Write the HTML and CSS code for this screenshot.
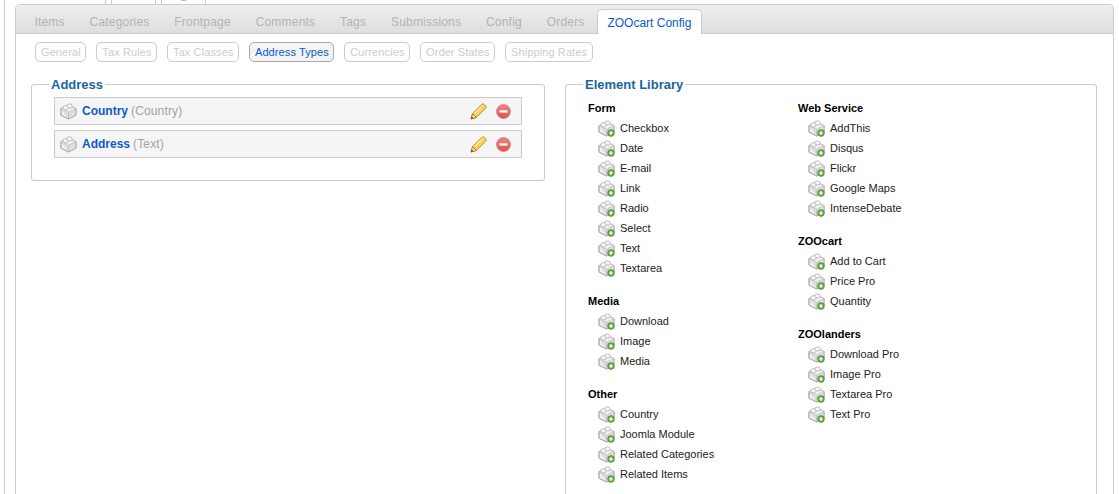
FILE: index.html
```html
<!DOCTYPE html>
<html>
<head>
    <meta charset="utf-8" />
    <title>ZOOcart Config</title>
    <link rel="stylesheet" href="styles.css">
</head>
<body>
    <svg class="defs" width="0" height="0">
        <defs>
            <linearGradient id="redFill" x1="0" y1="0" x2="0" y2="1">
                <stop offset="0" stop-color="#ee8580"/>
                <stop offset="1" stop-color="#dc5350"/>
            </linearGradient>
        </defs>
        <symbol id="brick" viewBox="0 0 17 17">
            <path d="M1 5.5 8.5 2 16 5.5v6.7L8.5 16 1 12.2z" fill="#f0f0f0" stroke="#b0b0b0"/>
            <path d="M1 5.8 8.5 9.5 16 5.8v6.4L8.5 16z" fill="#dedede"/>
            <path d="M1 5.5 8.5 9.3 16 5.5M8.5 9.3V16" fill="none" stroke="#bcbcbc" stroke-width=".8"/>
            <path d="M1 5.5v6.7L8.5 16l7.5-3.8V5.5" fill="none" stroke="#b0b0b0"/>
            <path d="M3 5.4V4.2a2.5 1.5 0 0 1 5 0v1.2a2.5 1.5 0 0 1-5 0z" fill="#f8f8f8" stroke="#b0b0b0" stroke-width=".8"/>
            <path d="M7 3.4V2.4a2.5 1.5 0 0 1 5 0v1a2.5 1.5 0 0 1-5 0z" fill="#f8f8f8" stroke="#b0b0b0" stroke-width=".8"/>
        </symbol>
        <symbol id="brick-add" viewBox="0 0 17 17">
            <use href="#brick"/>
            <circle cx="13" cy="13" r="3.4" fill="#6aa84a" stroke="#4a8a2e" stroke-width=".6"/>
            <path d="M13 11.1v3.8M11.1 13h3.8" stroke="#fff" stroke-width="1.2"/>
        </symbol>
        <symbol id="pencil" viewBox="0 0 17 17">
            <path d="M1 16 2.6 10.6 11.8 1.4a1.8 1.8 0 0 1 2.5 0l1.3 1.3a1.8 1.8 0 0 1 0 2.5L6.4 14.4z" fill="#f8d25c" stroke="#cf8f22"/>
            <path d="M1 16 2.6 10.6 6.4 14.4z" fill="#f3dcae" stroke="#a8691d" stroke-width=".8"/>
            <path d="M1 16 1.7 13.6 3.4 15.3z" fill="#6d431a"/>
            <path d="M4.6 10.6 12.6 2.6" stroke="#fdf0b5" stroke-width="1.2"/>
        </symbol>
        <symbol id="remove" viewBox="0 0 15 15">
            <circle cx="7.5" cy="7.5" r="6.9" fill="url(#redFill)" stroke="#d77b74" stroke-width=".9"/>
            <path d="M3.5 6.3h8v2.3h-8z" fill="#fff"/>
        </symbol>
    </svg>

    <div class="page">
        <div class="top-tabs">
            <span class="top-tab"></span>
            <span class="top-tab top-tab-mark"></span>
        </div>
        <div class="panel">
            <ul class="tabs">
                <li><a href="#">Items</a></li>
                <li><a href="#">Categories</a></li>
                <li><a href="#">Frontpage</a></li>
                <li><a href="#">Comments</a></li>
                <li><a href="#">Tags</a></li>
                <li><a href="#">Submissions</a></li>
                <li><a href="#">Config</a></li>
                <li><a href="#">Orders</a></li>
                <li class="active"><a href="#">ZOOcart Config</a></li>
            </ul>
            <ul class="subtabs">
                <li><a href="#">General</a></li>
                <li><a href="#">Tax Rules</a></li>
                <li><a href="#">Tax Classes</a></li>
                <li class="active"><a href="#">Address Types</a></li>
                <li><a href="#">Currencies</a></li>
                <li><a href="#">Order States</a></li>
                <li><a href="#">Shipping Rates</a></li>
            </ul>
            <div class="columns">
                <fieldset class="box assigned">
                    <legend>Address</legend>
                    <div class="element">
                        <svg class="brick"><use href="#brick"/></svg>
                        <a class="name" href="#">Country</a>
                        <span class="type">(Country)</span>
                        <svg class="edit"><use href="#pencil"/></svg>
                        <svg class="delete"><use href="#remove"/></svg>
                    </div>
                    <div class="element">
                        <svg class="brick"><use href="#brick"/></svg>
                        <a class="name" href="#">Address</a>
                        <span class="type">(Text)</span>
                        <svg class="edit"><use href="#pencil"/></svg>
                        <svg class="delete"><use href="#remove"/></svg>
                    </div>
                </fieldset>
                <fieldset class="box library">
                    <legend>Element Library</legend>
                    <div class="library-col">
                        <h4>Form</h4>
                        <ul>
                            <li><svg><use href="#brick-add"/></svg>Checkbox</li>
                            <li><svg><use href="#brick-add"/></svg>Date</li>
                            <li><svg><use href="#brick-add"/></svg>E-mail</li>
                            <li><svg><use href="#brick-add"/></svg>Link</li>
                            <li><svg><use href="#brick-add"/></svg>Radio</li>
                            <li><svg><use href="#brick-add"/></svg>Select</li>
                            <li><svg><use href="#brick-add"/></svg>Text</li>
                            <li><svg><use href="#brick-add"/></svg>Textarea</li>
                        </ul>
                        <h4>Media</h4>
                        <ul>
                            <li><svg><use href="#brick-add"/></svg>Download</li>
                            <li><svg><use href="#brick-add"/></svg>Image</li>
                            <li><svg><use href="#brick-add"/></svg>Media</li>
                        </ul>
                        <h4>Other</h4>
                        <ul>
                            <li><svg><use href="#brick-add"/></svg>Country</li>
                            <li><svg><use href="#brick-add"/></svg>Joomla Module</li>
                            <li><svg><use href="#brick-add"/></svg>Related Categories</li>
                            <li><svg><use href="#brick-add"/></svg>Related Items</li>
                        </ul>
                    </div>
                    <div class="library-col">
                        <h4>Web Service</h4>
                        <ul>
                            <li><svg><use href="#brick-add"/></svg>AddThis</li>
                            <li><svg><use href="#brick-add"/></svg>Disqus</li>
                            <li><svg><use href="#brick-add"/></svg>Flickr</li>
                            <li><svg><use href="#brick-add"/></svg>Google Maps</li>
                            <li><svg><use href="#brick-add"/></svg>IntenseDebate</li>
                        </ul>
                        <h4>ZOOcart</h4>
                        <ul>
                            <li><svg><use href="#brick-add"/></svg>Add to Cart</li>
                            <li><svg><use href="#brick-add"/></svg>Price Pro</li>
                            <li><svg><use href="#brick-add"/></svg>Quantity</li>
                        </ul>
                        <h4>ZOOlanders</h4>
                        <ul>
                            <li><svg><use href="#brick-add"/></svg>Download Pro</li>
                            <li><svg><use href="#brick-add"/></svg>Image Pro</li>
                            <li><svg><use href="#brick-add"/></svg>Textarea Pro</li>
                            <li><svg><use href="#brick-add"/></svg>Text Pro</li>
                        </ul>
                    </div>
                </fieldset>
            </div>
        </div>
    </div>
</body>
</html>
```

FILE: styles.css
```css
html, body {
    height: 494px;
    overflow: hidden;
}

body {
    margin: 0;
    background: #fff;
    font-family: "Liberation Sans", Arial, sans-serif;
    font-size: 11px;
    color: #222;
}

a {
    text-decoration: none;
}

ul {
    list-style: none;
    margin: 0;
    padding: 0;
}

.defs {
    display: block;
    height: 0;
}

.page {
    margin-left: 4px;
    height: 494px;
    box-sizing: border-box;
    padding-left: 10px;
    border-left: 1px solid #ccc;
}

/* the two tabs cut off at the top of the window */
.top-tabs {
    display: flex;
    gap: 5px;
    height: 4px;
    margin-left: 90px;
    padding-left: 5px;
    border-left: 1px solid #ccc;
}

.top-tab {
    display: flex;
    justify-content: center;
    width: 45px;
    border: solid #ccc;
    border-width: 0 1px;
    box-sizing: border-box;
}

.top-tab-mark::after {
    content: "";
    width: 5px;
    height: 1px;
    background: #bbb;
}

.panel {
    width: 1099px;
    height: 490px;
    box-sizing: border-box;
    border: 1px solid #ccc;
    border-bottom: 0;
    border-radius: 5px 5px 0 0;
}

.tabs {
    display: flex;
    height: 28px;
    padding-left: 6px;
    background: linear-gradient(#eeeeee, #dedede);
    border-bottom: 1px solid #ccc;
    border-radius: 4px 4px 0 0;
}

.tabs a {
    display: block;
    padding: 0 12.4px;
    font-size: 12px;
    line-height: 35px;
    color: #b3b3b3;
    letter-spacing: .2px;
}

.tabs .active {
    height: 24px;
    margin-top: 4px;
    background: #fff;
    border: 1px solid #ccc;
    border-bottom: 0;
    border-radius: 5px 5px 0 0;
}

.tabs .active a {
    color: #0b5bcb;
    line-height: 27px;
    padding: 0 9.5px;
    letter-spacing: 0;
}

.subtabs {
    display: flex;
    gap: 10px;
    padding: 8px 0 0 19px;
}

.subtabs a {
    display: block;
    height: 18px;
    line-height: 18px;
    padding: 0 4.5px 0 5px;
    font-size: 11px;
    color: #ccc;
    letter-spacing: .1px;
    border: 1px solid #ccc;
    border-radius: 5px;
}

.subtabs .active a {
    color: #0b5bcb;
    background: #f4f4f4;
    border-color: #aaa;
}

.columns {
    display: flex;
    align-items: flex-start;
    gap: 20px;
    margin-top: 14px;
    padding-left: 15px;
}

.box {
    margin: 0;
    padding: 0;
    border: 1px solid #ccc;
    border-radius: 3px;
    box-sizing: border-box;
}

.box legend {
    margin-left: -5px;
    padding: 2px 2px 1px;
    font-size: 13px;
    font-weight: bold;
    line-height: 14px;
    color: #1a66a0;
}

.assigned {
    width: 514px;
    height: 105px;
    padding: 4px 22px 0;
}

.element {
    display: flex;
    align-items: center;
    height: 28px;
    box-sizing: border-box;
    padding: 0 10px 0 5px;
    margin-bottom: 5px;
    background: #f5f5f5;
    border: 1px solid #ccc;
    font-size: 12px;
}

.element .brick {
    width: 17px;
    height: 17px;
    margin-right: 5px;
}

.element .name {
    font-weight: bold;
    color: #0b5bcb;
}

.element .type {
    margin-left: 3px;
    color: #a3a3a3;
    letter-spacing: .15px;
    flex: 1;
}

.element .edit {
    width: 17px;
    height: 17px;
    margin-right: 9px;
}

.element .delete {
    width: 15px;
    height: 15px;
}

.library {
    width: 532px;
    height: 418px;
    padding: 5px 0 0 22px;
    border-bottom: 0;
    border-radius: 3px 3px 0 0;
    display: flex;
}

.library-col {
    width: 210px;
}

.library h4 {
    margin: 0;
    font-size: 11px;
    line-height: 20px;
    color: #000;
}

.library ul {
    margin-bottom: 13px;
}

.library li {
    display: flex;
    align-items: center;
    height: 20px;
    padding-left: 10px;
    color: #222;
}

.library li svg {
    width: 17px;
    height: 17px;
    margin-right: 5px;
}
```
